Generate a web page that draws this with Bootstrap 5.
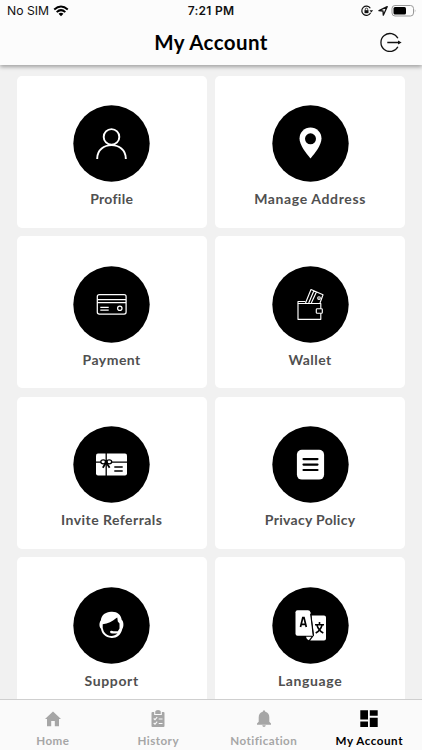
<!DOCTYPE html>
<html lang="en">
<head>
<meta charset="utf-8">
<meta name="viewport" content="width=device-width, initial-scale=1">
<title>My Account</title>
<link href="https://cdn.jsdelivr.net/npm/bootstrap@5.3.0/dist/css/bootstrap.min.css" rel="stylesheet">
<style>
body{font-family:Lato,"Liberation Sans",sans-serif;background:#f1f1f1;height:750px}
.app-head{height:65px;background:#fcfcfc;box-shadow:0 2px 4px rgba(0,0,0,.33);z-index:2}
.status{height:22px;font:12.2px/22px Inter,sans-serif;color:#111;padding:0 5px 0 7px}
.status>div{flex:1 1 0}
.status .clock{font-weight:600;font-size:12px;letter-spacing:.25px;margin-left:-2px}
.title-row{height:43px;padding:0 20px;grid-template-columns:22px 1fr 22px}
.title-row h1{font-size:20.5px;font-weight:700;line-height:40px;letter-spacing:.4px;color:#000}
.tile-area{min-height:0}
.tiles{display:grid;grid-template-columns:190px 190px;grid-auto-rows:152.2px;gap:8.3px 8.4px;padding:10.6px 16.7px 0}
.tile{border-radius:5px;padding-top:29.7px;color:#505050;font-size:14px;font-weight:700;letter-spacing:.46px}
.tile svg{width:77px;height:77px;display:block}
.tile span{line-height:20px;margin-top:6.9px;white-space:nowrap}
.tile .tight{letter-spacing:.3px}
.tile .loose{letter-spacing:.62px}
.tabs{height:51px;background:#fafafa;border-top:1px solid #cfcfcf;color:#a6a6a6;font-size:11.6px;font-weight:700;letter-spacing:.45px}
.tabs a{width:25%;padding-top:9px;color:inherit}
.tabs span{line-height:16px;margin-top:4px;white-space:nowrap}
.tabs .on{color:#000}
.tabs .on span{letter-spacing:.56px}
</style>
<script src="https://cdn.jsdelivr.net/npm/bootstrap@5.3.0/dist/js/bootstrap.bundle.min.js"></script>
</head>
<body class="d-flex flex-column overflow-hidden">
<header class="app-head flex-shrink-0 position-relative">
  <div class="status d-flex align-items-center">
    <div class="d-flex align-items-center"><span>No SIM</span>
      <svg class="ms-1" width="16" height="12" viewBox="0 0 17 12" fill="none" stroke="#000" stroke-width="2.1"><path d="M1.300 4.500Q8.500-2 15.700 4.500M3.900 7.200Q8.500 3 13.100 7.200"/><path d="M8.500 11.500L5.900 8.900Q8.500 6.900 11.100 8.900Z" fill="#000" stroke="none"/></svg></div>
    <div class="clock text-center">7:21 PM</div>
    <div class="d-flex justify-content-end align-items-center">
      <svg width="57" height="14" viewBox="-2 0 57 14" fill="none" stroke="#111"><path d="M8.300 4.300A4.600 4.600 0 1 0 8.600 8.700" stroke-width="1.200"/><path d="M7.500 6.200h3.600l-1.800 2.300z" fill="#111" stroke="none"/><path d="M2.500 6.200h4v3h-4z" fill="#111" stroke="none"/><path d="M3.300 6.500V5.300a1.200 1.200 0 0 1 2.400 0V6.500" stroke-width=".8"/><path d="M25.200 2.700L17 6.600 21 7 21.300 11.200Z" stroke-width="1.300" stroke-linejoin="round"/><rect x="30" y="1.500" width="21.500" height="10.500" rx="3" stroke="#999"/><rect x="31.500" y="3" width="12.500" height="7.500" rx="1.500" fill="#000" stroke="none"/><path d="M52.800 5.200q1.400 1.600 0 3.200z" fill="#999" stroke="none"/></svg></div>
  </div>
  <div class="title-row d-grid">
    <span></span><h1 class="text-center m-0">My Account</h1>
    <svg width="22" height="22" viewBox="0 0 22 22" class="mt-2" fill="none" stroke="#111" stroke-width="1.300"><path d="M17.900 8.300A9 9 0 1 0 17.900 16.700M7.300 12.500H20"/><path d="M18 10.400l3.600 2.100-3.600 2.100z" fill="#111" stroke="none"/></svg>
  </div>
</header>
<main class="tile-area flex-grow-1 overflow-hidden">
<div class="tiles">
  <a class="tile bg-white d-flex flex-column align-items-center text-decoration-none"><svg viewBox="0 0 77 77"><circle cx="38.500" cy="38.500" r="38.200"/><g fill="none" stroke="#fff" stroke-width="1.900"><circle cx="38.500" cy="31.900" r="7.800"/><path d="M24.200 54V53.500C24.200 35.700 52.800 35.700 52.800 53.500V54"/></g></svg><span class="tight">Profile</span></a>
  <a class="tile bg-white d-flex flex-column align-items-center text-decoration-none"><svg viewBox="0 0 77 77"><circle cx="38.500" cy="38.500" r="38.200"/><path d="M38.500 53.500C34 48 27.500 40 27.500 33.500A11 11 0 0 1 49.500 33.500C49.500 40 43 48 38.500 53.500Z" fill="#fff"/><circle cx="38.500" cy="33.800" r="5.500"/></svg><span class="loose">Manage Address</span></a>
  <a class="tile bg-white d-flex flex-column align-items-center text-decoration-none"><svg viewBox="0 0 77 77"><circle cx="38.500" cy="38.500" r="38.200"/><g fill="none" stroke="#fff" stroke-width="1.250"><rect x="24.300" y="28.500" width="28.800" height="19.600" rx="2"/><path d="M24.300 33.500H53M24.300 36.700H53M27.300 41.300H35.700M27.300 44H35.700"/><circle cx="46.800" cy="42.200" r="2.200"/></g></svg><span>Payment</span></a>
  <a class="tile bg-white d-flex flex-column align-items-center text-decoration-none"><svg viewBox="0 0 77 77"><circle cx="38.500" cy="38.500" r="38.200"/><g fill="none" stroke="#fff" stroke-width="1.150" stroke-linejoin="round"><path d="M48.800 42.700V37.500H26V53.300H48.800V47.200"/><path d="M26 37.500V35.500H33.200M33.500 37L39 23.500 51 28.700 48 37M36.700 37L41.800 25M39.300 37L44.300 26.200"/><rect x="44.300" y="42.700" width="6" height="4.500" rx=".8"/><circle cx="47" cy="32" r="1.300"/></g></svg><span>Wallet</span></a>
  <a class="tile bg-white d-flex flex-column align-items-center text-decoration-none"><svg viewBox="0 0 77 77"><circle cx="38.500" cy="38.500" r="38.200"/><rect x="23" y="27.500" width="31" height="22" rx="2" fill="#fff"/><g fill="none" stroke="#000" stroke-width="1.300"><path d="M33.200 27V50M22 36.100H55"/><ellipse cx="30.300" cy="35.800" rx="2.500" ry="2" fill="#fff"/><ellipse cx="36.200" cy="35.800" rx="2.500" ry="2" fill="#fff"/><path d="M32.800 37L29.800 41.800M33.600 37L36.600 41.800" stroke-width="1.800"/><path d="M41.300 41H49.700M41.300 45H49.700" stroke-width="1.500"/></g><rect x="31.700" y="34.200" width="3" height="3.300"/></svg><span>Invite Referrals</span></a>
  <a class="tile bg-white d-flex flex-column align-items-center text-decoration-none"><svg viewBox="0 0 77 77"><circle cx="38.500" cy="38.500" r="38.200"/><rect x="24.900" y="23.800" width="27.200" height="29.800" rx="5" fill="#fff"/><path d="M31.500 33.100H45.500M31.500 38.600H45.500M31.500 44H45.500" stroke="#000" stroke-width="2.200" stroke-linecap="round"/></svg><span class="tight">Privacy Policy</span></a>
  <a class="tile bg-white d-flex flex-column align-items-center text-decoration-none"><svg viewBox="0 0 77 77"><circle cx="38.500" cy="38.500" r="38.200"/><path d="M38 24.800C44 24.300 48 27.500 48.700 32.800C50.800 34 51 40 49.300 42C48 48 43.500 51.300 38.500 51C32 50.500 28.500 46 28 41.800C26 40 26 35.500 27.800 33.500C28.500 28 32.500 25 38 24.800Z" fill="#fff"/><path d="M29.700 37.300C35 36.600 39.500 34.500 42.700 31.500L44.300 30.600 44.800 34.500 46.500 36.500V41.500L44.800 44.200H40.500Q37.200 43.200 37 45Q37.300 46.800 40.500 46.500H44.500C40 50.500 33.500 49.300 30.700 44.200Q29.200 41 29.700 37.300Z"/></svg><span class="loose">Support</span></a>
  <a class="tile bg-white d-flex flex-column align-items-center text-decoration-none"><svg viewBox="0 0 77 77"><circle cx="38.500" cy="38.500" r="38.200"/><path d="M39.500 28.500H52Q54 28.500 54 30.500V51.500Q54 53.500 52 53.500H38.200L42 48.500Z" fill="#fff"/><path d="M25.500 23.300H36Q38 23.300 38.400 25.300L41 48.700H25.500Q23.500 48.700 23.500 46.700V25.300Q23.500 23.300 25.500 23.300Z" fill="#fff"/><path d="M38.700 27L41.300 48.500" stroke="#000" stroke-width="1.100"/><path d="M34 49.700H39.500L36.800 53.300Q34.500 52.500 34 49.700Z" fill="#fff"/><path d="M28.500 40L30.800 30.500H32L34.300 40M29.300 37.300H33.500" fill="none" stroke="#000" stroke-width="1.700"/><path d="M43 37.700H52M47.500 35V37.700M50 38.200Q48.500 43.500 43.700 46M45 38.200Q46.500 43.500 51.300 46" fill="none" stroke="#000" stroke-width="1.600"/></svg><span class="loose">Language</span></a>
</div>
</main>
<nav class="tabs d-flex flex-shrink-0">
  <a class="d-flex flex-column align-items-center text-decoration-none"><svg width="20" height="20" viewBox="0 0 20 20" fill="currentColor"><path d="M10 2.500L18 10H16V17.300H11.800V12H8.200V17.300H4V10H2Z"/></svg><span>Home</span></a>
  <a class="d-flex flex-column align-items-center text-decoration-none"><svg width="20" height="20" viewBox="0 0 20 20" fill="currentColor"><path d="M4.500 3H7Q7.500 1 10 1Q12.500 1 13 3H15.500Q16.500 3 16.500 4V17Q16.500 18 15.500 18H4.500Q3.500 18 3.500 17V4Q3.500 3 4.500 3Z"/><path d="M6.700 3V5.500H13.300V3M5.700 9.500L7 10.700 9.200 8.200M5.700 14L7 15.200 9.200 12.700M10.700 10H14.500M10.700 14.500H14.500" fill="none" stroke="#fafafa" stroke-width="1.100"/></svg><span>History</span></a>
  <a class="d-flex flex-column align-items-center text-decoration-none"><svg width="20" height="20" viewBox="0 0 20 20" fill="currentColor"><path d="M10 1.200Q11.200 1.200 11.300 2.800Q15.300 4 15.300 8.300V12.700L17 14.500V15.700H3V14.500L4.700 12.700V8.300Q4.700 4 8.700 2.800Q8.800 1.200 10 1.200ZM8.200 16.300H11.800Q11.500 18 10 18Q8.500 18 8.200 16.300Z"/></svg><span>Notification</span></a>
  <a class="on d-flex flex-column align-items-center text-decoration-none"><svg width="20" height="20" viewBox="0 0 20 20" fill="currentColor"><path d="M1.300 1.200H9V10.600H1.300ZM10.800 1.200H18.700V6.700H10.800ZM1.300 12.500H9V18H1.300ZM10.800 8.700H18.700V18H10.800Z"/></svg><span>My Account</span></a>
</nav>
</body>
</html>
